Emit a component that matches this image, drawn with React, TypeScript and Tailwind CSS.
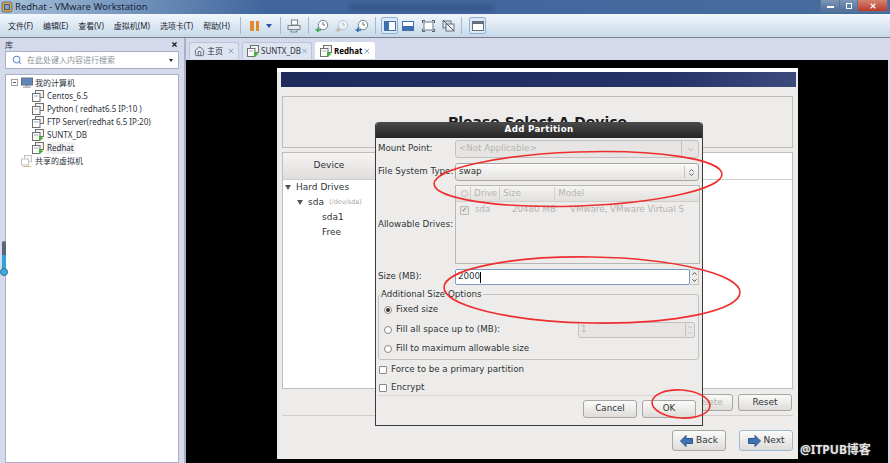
import React from 'react';
import { ChevronDown, ChevronsUpDown, Search, X, House } from 'lucide-react';

const cjk = 'font-["Noto_Sans","Noto_Sans_CJK_SC",sans-serif]';
const gtk = 'font-["DejaVu_Sans",sans-serif]';

const menus = ['文件(F)', '编辑(E)', '查看(V)', '虚拟机(M)', '选项卡(T)', '帮助(H)'];

const VmIcon = ({ running = false }: { running?: boolean }) => (
  <svg width="12" height="12" viewBox="0 0 12 12" className="shrink-0">
    <rect x="3.5" y="0.5" width="8" height="7" fill="#f2f2f2" stroke="#707070" />
    <rect x="0.5" y="3.5" width="7.5" height="8" fill="#fff" stroke="#707070" />
    <rect x="2" y="5" width="4.5" height="2" fill="#cfd6de" />
    {running && <path d="M7 6.5 L11.5 9.2 L7 12 Z" fill="#3db82e" />}
  </svg>
);

const ClockIcon = ({ colour, faded = false }: { colour: string; faded?: boolean }) => (
  <svg width="14" height="14" viewBox="0 0 14 14" className={faded ? 'opacity-40' : ''}>
    <circle cx="8" cy="6" r="4.7" fill="#fff" stroke="#7b8794" />
    <path d="M8 3.2 V6 H10" fill="none" stroke="#66727f" />
    <path d="M0.5 11 H6 M3 8.5 V13" stroke={colour} strokeWidth="1.6" fill="none" />
  </svg>
);

const Sep = () => <div className="mx-[6px] h-[17px] w-px bg-[#a8b8cc]" />;

const TitleBar = () => (
  <div className="relative flex h-[14px] items-center bg-gradient-to-r from-[#a9c2da] via-[#3f659c] via-[30%] to-[#476c9f] pl-[1px]">
    <svg width="12" height="12" viewBox="0 0 12 12" className="mr-[2px]">
      <rect x="1" y="1" width="10" height="10" rx="2" fill="#e9a23b" stroke="#56728f" />
      <rect x="3.5" y="3.5" width="5" height="5" fill="#7da4c8" stroke="#465f78" />
    </svg>
    <span className={`${cjk} text-[9.5px] leading-none text-[#17263a]`}>Redhat - VMware Workstation</span>
    <div className="ml-[201px] h-[7px] w-[145px] bg-[#2f4f82] opacity-60 blur-[2px]" />
    <div className="absolute top-0 right-[2px] flex h-[12px] overflow-hidden rounded-b-[3px] border border-t-0 border-[#5e7592]">
      <div className="flex w-[18px] items-center justify-center bg-gradient-to-b from-[#7e97b8] to-[#4f6f9c]">
        <div className="mt-[3px] h-[2px] w-[7px] bg-white" />
      </div>
      <div className="flex w-[19px] items-center justify-center border-x border-[#5e7592] bg-gradient-to-b from-[#7e97b8] to-[#4f6f9c]">
        <div className="h-[6px] w-[6px] border border-white" />
      </div>
      <div className="flex w-[29px] items-center justify-center bg-gradient-to-b from-[#d8826f] to-[#b8392b]">
        <X size={8} strokeWidth={3.5} className="text-white" />
      </div>
    </div>
  </div>
);

const ToolBar = () => (
  <div className="flex h-[24px] items-center border-b border-[#7c7f8a] bg-gradient-to-b from-[#f2f7fb] to-[#c6d9ea] pl-[8px]">
    <div className={`${cjk} flex w-[226px] gap-[10px] text-[8px] text-[#1c2530]`}>
      {menus.map((m) => (
        <span key={m} className="whitespace-nowrap">{m}</span>
      ))}
    </div>
    <Sep />
    <div className="ml-[3px] flex items-center gap-[2px]">
      <div className="h-[10px] w-[3.5px] bg-[#e08a2a]" />
      <div className="h-[10px] w-[3.5px] bg-[#e08a2a]" />
    </div>
    <div className="ml-[7px] h-0 w-0 border-x-[3px] border-t-[4px] border-x-transparent border-t-[#2d55a5]" />
    <div className="ml-[2px]"><Sep /></div>
    <svg width="14" height="14" viewBox="0 0 14 14">
      <rect x="4.5" y="1" width="6" height="5" fill="#fff" stroke="#78828d" />
      <rect x="1" y="6.5" width="12" height="4" fill="#e8ecf0" stroke="#78828d" />
      <path d="M4 11 V13 H10 V11" fill="none" stroke="#78828d" />
    </svg>
    <div className="ml-[1px]"><Sep /></div>
    <div className="flex gap-[6px]">
      <ClockIcon colour="#3ea345" />
      <ClockIcon colour="#a8843f" faded />
      <ClockIcon colour="#2b6cb0" />
    </div>
    <Sep />
    <div className="ml-[-1px] flex h-[17px] w-[17px] items-center justify-center rounded-[2px] border border-[#8fb0d6] bg-[#dce9f6]">
      <div className="flex h-[10px] w-[12px] border border-[#3f6fae] bg-white">
        <div className="w-[4px] bg-[#3f6fae]" />
      </div>
    </div>
    <div className="ml-[4px] flex h-[10px] w-[12px] flex-col border border-[#3f6fae] bg-white">
      <div className="mt-auto h-[4px] bg-[#3f6fae]" />
    </div>
    <svg width="13" height="12" viewBox="0 0 13 12" className="ml-[8px]">
      <rect x="2" y="2" width="9" height="8" fill="#fff" stroke="#6f7a86" />
      <path d="M0.5 3 V0.5 H3 M10 0.5 H12.5 V3 M0.5 9 V11.5 H3 M12.5 9 V11.5 H10" fill="none" stroke="#4f5a66" />
    </svg>
    <svg width="13" height="13" viewBox="0 0 13 13" className="ml-[7px]">
      <rect x="1" y="2" width="8" height="7" fill="#dfe5ea" stroke="#66707b" />
      <rect x="4" y="5" width="8" height="7" fill="#eef1f4" stroke="#66707b" />
      <path d="M1 1 L12 12" stroke="#4f5a66" />
    </svg>
    <Sep />
    <div className="ml-[1px] flex h-[17px] w-[17px] items-center justify-center rounded-[2px] border border-[#8fb0d6] bg-[#dce9f6]">
      <div className="h-[10px] w-[12px] border border-[#66707b] bg-white">
        <div className="h-[2px] bg-[#66707b]" />
      </div>
    </div>
  </div>
);

const TreeRow = ({ label, running, active }: { label: string; running?: boolean; active?: boolean }) => (
  <div className="flex h-[13px] items-center pl-[26px]">
    <VmIcon running={running} />
    <span className={`ml-[2px] px-[1px] whitespace-nowrap text-[#2b333b] ${active ? 'bg-[#f1f1f1]' : ''}`}>{label}</span>
  </div>
);

const SideBar = () => (
  <aside className={`${cjk} relative flex w-[186px] shrink-0 flex-col border-r-2 border-[#a9afc6] bg-[#d4d9ec] px-[5px] text-[8px]`}>
    <div className="flex h-[13px] items-center justify-between pr-[1px]">
      <span className="text-[#2b333b]">库</span>
      <X size={7} strokeWidth={4} className="text-[#1a1a1a]" />
    </div>
    <div className="flex h-[18px] items-center border border-[#a9afc6] bg-white pr-[5px] pl-[6px] text-[#8b8f96]">
      <Search size={10} strokeWidth={2.5} className="mr-[5px] text-[#5f8fc4]" />
      <span className="flex-1">在此处键入内容进行搜索</span>
      <div className="h-0 w-0 border-x-[2.5px] border-t-[3px] border-x-transparent border-t-[#222]" />
    </div>
    <div className="mt-[5px] flex-1 border border-[#a9afc6] bg-white pt-[1px]">
      <div className="flex h-[13px] items-center pl-[5px] text-[#2b333b]">
        <div className="mr-[3px] flex h-[7px] w-[7px] items-center justify-center border border-[#a0a0a0]">
          <div className="h-px w-[3px] bg-[#555]" />
        </div>
        <svg width="12" height="12" viewBox="0 0 12 12" className="mr-[2px]">
          <rect x="0.5" y="1" width="11" height="7" fill="#5f86b8" stroke="#66707b" />
          <rect x="4" y="8" width="4" height="1.5" fill="#8e96a0" />
          <rect x="2" y="9.5" width="8" height="1.5" fill="#b5bbc2" />
        </svg>
        <span>我的计算机</span>
      </div>
      <TreeRow label="Centos_6.5" />
      <TreeRow label="Python ( redhat6.5 IP:10 )" />
      <TreeRow label="FTP Server(redhat 6.5 IP:20)" />
      <TreeRow label="SUNTX_DB" running />
      <TreeRow label="Redhat" running active />
      <div className="flex h-[13px] items-center pl-[15px] text-[#2b333b]">
        <svg width="12" height="12" viewBox="0 0 12 12" className="mr-[2px] opacity-60">
          <rect x="3.5" y="0.5" width="7" height="6" fill="#f4f4f4" stroke="#9a9a9a" />
          <rect x="0.5" y="4" width="7" height="6" fill="#fff" stroke="#9a9a9a" />
          <path d="M2 11.5 H10" stroke="#b08a4a" />
        </svg>
        <span>共享的虚拟机</span>
      </div>
    </div>
    {/* thermometer-style slider sitting on the sidebar edge */}
    <div className="absolute top-[203px] left-[2px] h-[32px] w-[4px] rounded-t-[2px] bg-gradient-to-b from-[#56677a] from-[43%] to-[#2fa3d8] to-[43%]" />
    <div className="absolute top-[230px] left-0 h-[8px] w-[8px] rounded-full border border-[#3f6f8f] bg-[#38aee0]" />
  </aside>
);

const Tab = ({ label, width, active, children }: { label: string; width: string; active?: boolean; children: React.ReactNode }) => (
  <div className={`flex h-[17px] items-center rounded-t-[3px] border border-b-0 pl-[4px] ${width} ${active ? 'border-white bg-white font-bold text-black' : 'border-[#bcc4da] bg-[#dfe4f1] text-[#2b333b]'}`}>
    {children}
    <span className="ml-[2px] flex-1 whitespace-nowrap">{label}</span>
    <X size={8} strokeWidth={3} className="mr-[3px] text-[#7fa3c9]" />
  </div>
);

const Tabs = () => (
  <div className={`${cjk} flex h-[21px] items-end gap-[3px] bg-[#d4d9ec] pb-0 pl-[3px] text-[8px]`}>
    <Tab label="主页" width="w-[50px]">
      <House size={11} className="text-[#5a6570]" />
    </Tab>
    <Tab label="SUNTX_DB" width="w-[70px]">
      <VmIcon running />
    </Tab>
    <Tab label="Redhat" width="w-[60px]" active>
      <VmIcon running />
    </Tab>
  </div>
);

const GtkButton = ({ label, className = '', disabled, focus, children }: { label: string; className?: string; disabled?: boolean; focus?: boolean; children?: React.ReactNode }) => (
  <div className={`flex items-center justify-center gap-[3px] rounded-[3px] border bg-gradient-to-b from-[#fbfbfa] to-[#dedcd9] ${focus ? 'border-[#9db8d2]' : 'border-[#a8a6a2]'} ${disabled ? 'text-[#b5b3b0]' : 'text-[#2e3436]'} ${className}`}>
    {children}
    <span>{label}</span>
  </div>
);

const BlueArrow = ({ left }: { left?: boolean }) => (
  <svg width="13" height="12" viewBox="0 0 13 12">
    <path d={left ? 'M0.5 6 L6 0.5 V3.5 H12.5 V8.5 H6 V11.5 Z' : 'M12.5 6 L7 0.5 V3.5 H0.5 V8.5 H7 V11.5 Z'} fill="#3c73b0" stroke="#2a5689" />
  </svg>
);

const Radio = ({ on }: { on?: boolean }) => (
  <div className="flex h-[8px] w-[8px] shrink-0 items-center justify-center rounded-full border border-[#8a8885] bg-white">
    {on && <div className="h-[4px] w-[4px] rounded-full bg-[#333]" />}
  </div>
);

const Check = () => <div className="h-[8px] w-[8px] shrink-0 rounded-[1px] border border-[#8a8885] bg-white" />;

const Dialog = () => (
  <div className={`${gtk} absolute top-[54px] left-[98px] flex h-[304px] w-[328px] flex-col rounded-t-[4px] border border-t-0 border-[#3a3a3a] bg-[#edeceb] text-[8.7px] text-[#2e3436]`}>
    <div className="flex h-[16px] shrink-0 items-center justify-center rounded-t-[4px] bg-gradient-to-b from-[#4a4a4a] to-[#262626] font-bold tracking-[0.3px] text-white">
      Add Partition
    </div>
    <div className="flex flex-col px-[1px]">
      <div className="mt-[2px] flex h-[18px] items-center">
        <span className="w-[78px] shrink-0 pl-[1px] whitespace-nowrap">Mount Point:</span>
        <div className="flex h-[18px] w-[244px] items-center rounded-[3px] border border-[#c4c2bf] bg-[#e6e5e3] pl-[3px] text-[#b6b4b1]">
          <span className="flex-1">&lt;Not Applicable&gt;</span>
          <div className="flex h-full w-[17px] items-center justify-center border-l border-[#c4c2bf]">
            <ChevronDown size={9} className="text-[#a5a3a0]" />
          </div>
        </div>
      </div>
      <div className="mt-[5px] flex h-[18px] items-center">
        <span className="w-[78px] shrink-0 pl-[1px] whitespace-nowrap">File System Type:</span>
        <div className="flex h-[18px] w-[244px] items-center rounded-[3px] border border-[#a8a6a2] bg-gradient-to-b from-[#fbfbfa] to-[#e4e2df] pl-[3px]">
          <span className="flex-1">swap</span>
          <div className="flex h-[12px] w-[14px] items-center justify-center border-l border-[#c4c2bf]">
            <ChevronsUpDown size={9} className="text-[#333]" />
          </div>
        </div>
      </div>
      <div className="mt-[4px] flex h-[79px] items-center">
        <span className="w-[78px] shrink-0 pl-[1px] whitespace-nowrap">Allowable Drives:</span>
        <div className="h-[79px] w-[245px] border border-[#b9b7b4] text-[#b6b4b1]">
          <div className="flex h-[16px] items-center border-b border-[#d0cecb] bg-gradient-to-b from-[#f5f4f3] to-[#e2e0de]">
            <div className="ml-[5px] h-[7px] w-[7px] rounded-full border border-[#c0bebb]" />
            <span className="ml-[2px] border-l border-[#d0cecb] pl-[3px]">Drive</span>
            <span className="ml-[2px] w-[55px] border-l border-[#d0cecb] pl-[3px]">Size</span>
            <span className="border-l border-[#d0cecb] pl-[3px]">Model</span>
          </div>
          <div className="flex h-[16px] items-center whitespace-nowrap">
            <div className="ml-[4px] flex h-[9px] w-[9px] items-center justify-center rounded-[1px] border border-[#b9b7b4] bg-[#e9e8e6] text-[7px] leading-none text-[#77757a]">✓</div>
            <span className="ml-[6px] w-[37px]">sda</span>
            <span className="w-[58px]">20480 MB</span>
            <span>VMware, VMware Virtual S</span>
          </div>
        </div>
      </div>
      <div className="mt-[5px] flex h-[16px] items-center">
        <span className="w-[78px] shrink-0 pl-[1px] whitespace-nowrap">Size (MB):</span>
        <div className="flex h-[16px] w-[235px] items-center rounded-[2px] border border-[#7a9cc4] bg-white pl-[2px]">
          <span>2000</span>
          <div className="h-[11px] w-px bg-black" />
        </div>
        <div className="flex h-[16px] w-[9px] flex-col items-center justify-center border border-l-0 border-[#c4c2bf] text-[#333]">
          <ChevronDown size={7} strokeWidth={3} className="rotate-180" />
          <ChevronDown size={7} strokeWidth={3} />
        </div>
      </div>
      <fieldset className="mt-[5px] ml-[1px] h-[70px] w-[321px] rounded-[3px] border border-[#c4c2bf] pl-[4px]">
        <legend className="ml-[-3px] px-[1px] leading-[9px]">Additional Size Options</legend>
        <div className="mt-[4px] flex h-[14px] items-center gap-[4px] pl-[1px]">
          <Radio on />
          <span>Fixed size</span>
        </div>
        <div className="mt-[5px] flex h-[15px] items-center gap-[4px] pl-[1px]">
          <Radio />
          <span className="flex-1">Fill all space up to (MB):</span>
          <div className="mr-[3px] flex h-[16px] w-[117px] items-center rounded-[2px] border border-[#c4c2bf] bg-[#e6e5e3] pl-[2px] text-[#b6b4b1]">
            <span className="flex-1">1</span>
            <div className="flex h-full w-[9px] flex-col items-center justify-center border-l border-[#c4c2bf] text-[#b6b4b1]">
              <ChevronDown size={6} strokeWidth={3} className="rotate-180" />
              <ChevronDown size={6} strokeWidth={3} />
            </div>
          </div>
        </div>
        <div className="mt-[5px] flex h-[14px] items-center gap-[4px] pl-[1px]">
          <Radio />
          <span>Fill to maximum allowable size</span>
        </div>
      </fieldset>
      <div className="mt-[3px] flex h-[14px] items-center gap-[4px] pl-[2px]">
        <Check />
        <span>Force to be a primary partition</span>
      </div>
      <div className="mt-[4px] flex h-[14px] items-center gap-[4px] pl-[2px]">
        <Check />
        <span>Encrypt</span>
      </div>
    </div>
    <div className="mx-[2px] flex flex-1 items-start justify-end gap-[5px] border-t border-[#d8d6d3] pt-[4px] pr-[4px]">
      <GtkButton label="Cancel" className="h-[18px] w-[54px]" />
      <GtkButton label="OK" className="h-[18px] w-[54px]" />
    </div>
  </div>
);

const Guest = () => (
  <div className={`${gtk} relative mt-[8px] ml-[91px] flex h-[391px] w-[521px] flex-col bg-[#edeceb] text-[9px] text-[#2e3436]`}>
    <div className="h-[4px] bg-white" />
    <div className="mx-[4px] h-[15px] w-[515px] bg-gradient-to-r from-[#1d2a5c] via-[#263368] via-[75%] to-[#3d4a7c]" />
    <div className="mx-[5px] mt-[9px] flex h-[52px] w-[511px] justify-center border border-[#bfbdba] pt-[18px] text-[14px] leading-none font-bold text-[#1c1c1c]">
      Please Select A Device
    </div>
    <div className="mx-[5px] mt-[4px] h-[237px] w-[511px] border border-[#bfbdba] bg-white">
      <div className="flex h-[26px] w-[92px] items-center justify-center bg-gradient-to-b from-[#f6f5f4] to-[#e0dedc] text-[#2e3436]">Device</div>
      <div className="border-t border-[#cfcdca] pl-[2px]">
        <div className="flex h-[15px] items-center gap-[5px]">
          <div className="h-0 w-0 border-x-[3.5px] border-t-[5px] border-x-transparent border-t-[#555]" />
          <span>Hard Drives</span>
        </div>
        <div className="flex h-[15px] items-center gap-[5px] pl-[12px]">
          <div className="h-0 w-0 border-x-[3.5px] border-t-[5px] border-x-transparent border-t-[#555]" />
          <span>sda</span>
          <span className="text-[6.5px] text-[#a8a6a3]">(/dev/sda)</span>
        </div>
        <div className="flex h-[15px] items-center pl-[37px]">sda1</div>
        <div className="flex h-[15px] items-center pl-[37px]">Free</div>
      </div>
    </div>
    <div className="mt-[5px] flex h-[17px] justify-end gap-[5px] pr-[6px]">
      <GtkButton label="Delete" className="w-[50px]" disabled />
      <GtkButton label="Reset" className="w-[54px]" />
    </div>
    <div className="mx-[5px] mt-[4px] h-px bg-[#d0cecb]" />
    <div className="mt-[14px] flex h-[21px] justify-end gap-[13px] pr-[5px]">
      <GtkButton label="Back" className="w-[54px]">
        <BlueArrow left />
      </GtkButton>
      <GtkButton label="Next" className="w-[54px]" focus>
        <BlueArrow />
      </GtkButton>
    </div>
    <Dialog />
  </div>
);

// hand-drawn red marks from the person who took the screenshot
const Annotations = () => (
  <svg className="pointer-events-none absolute inset-0" width="890" height="463" viewBox="0 0 890 463" fill="none" stroke="#ee2f2f" strokeWidth="1.6">
    <ellipse cx="578" cy="179" rx="144" ry="27" transform="rotate(-2 578 179)" />
    <ellipse cx="592" cy="290" rx="148" ry="33" transform="rotate(1 592 290)" />
    <ellipse cx="681" cy="404" rx="29" ry="14" transform="rotate(4 681 404)" />
  </svg>
);

export default function App() {
  return (
    <div className="relative flex h-[463px] w-[890px] flex-col overflow-hidden bg-[#d4d9ec]">
      <TitleBar />
      <ToolBar />
      <div className="flex min-h-0 flex-1">
        <SideBar />
        <main className="flex min-w-0 flex-1 flex-col pr-[2px]">
          <Tabs />
          <div className="mt-[1px] flex-1 bg-black">
            <Guest />
          </div>
        </main>
      </div>
      <Annotations />
      <span className={`${cjk} absolute top-[441px] left-[800px] text-[12px] font-bold text-[#e4e4e4] [text-shadow:0_0_2px_#555]`}>
        @ITPUB博客
      </span>
    </div>
  );
}
